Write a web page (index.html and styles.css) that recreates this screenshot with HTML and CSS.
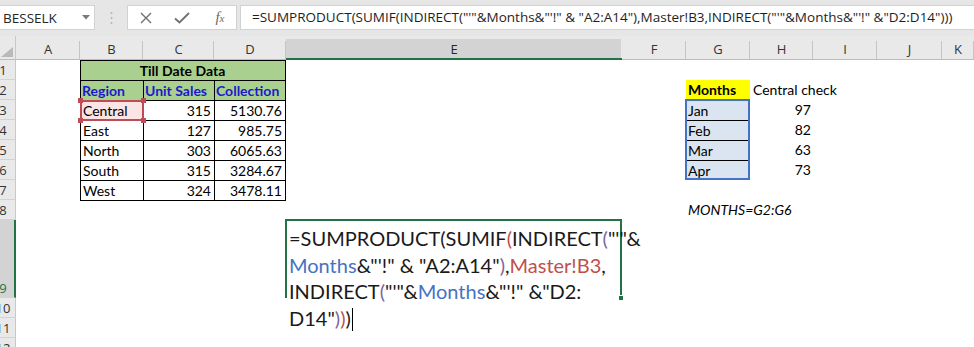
FILE: index.html
```html
<!DOCTYPE html>
<html lang="en">
<head>
  <meta charset="UTF-8"/>
  <title>Sheet</title>
  <link rel="stylesheet" href="styles.css">
</head>
<body>
  <div class="fbar">
    <div class="namebox">
      <span>BESSELK</span>
      <svg width="8" height="5" viewBox="0 0 8 5"><path d="M0 0h8L4 4.5z" fill="#7a7a7a"/></svg>
    </div>
    <div class="grip">
      <svg width="3" height="14" viewBox="0 0 3 14"><circle cx="1.5" cy="2" r="1" fill="#b3b3b3"/><circle cx="1.5" cy="7" r="1" fill="#b3b3b3"/><circle cx="1.5" cy="12" r="1" fill="#b3b3b3"/></svg>
    </div>
    <div class="fbtns">
      <span class="slot"><svg width="12" height="12" viewBox="0 0 12 12"><path d="M1 1l10 10M11 1L1 11" stroke="#707070" stroke-width="1.4"/></svg></span>
      <span class="slot"><svg width="16" height="12" viewBox="0 0 16 12"><path d="M1 6.5l4.5 4L15 1" stroke="#707070" stroke-width="1.8" fill="none"/></svg></span>
      <span class="slot fx">f<small>x</small></span>
    </div>
    <div class="finput">=SUMPRODUCT(SUMIF(INDIRECT("'"&amp;Months&amp;"'!" &amp; "A2:A14"),Master!B3,INDIRECT("'"&amp;Months&amp;"'!" &amp;"D2:D14")))</div>
  </div>

  <div class="sheet">
    <div class="corner"><svg width="12" height="10" viewBox="0 0 12 10"><path d="M12 0v10H0z" fill="#b9b9b9"/></svg></div>
    <div class="colhead">A</div>
    <div class="colhead">B</div>
    <div class="colhead">C</div>
    <div class="colhead">D</div>
    <div class="colhead active">E</div>
    <div class="colhead">F</div>
    <div class="colhead">G</div>
    <div class="colhead">H</div>
    <div class="colhead">I</div>
    <div class="colhead">J</div>
    <div class="colhead">K</div>

    <div class="rowhead"><span>1</span></div>
    <div class="rowhead"><span>2</span></div>
    <div class="rowhead"><span>3</span></div>
    <div class="rowhead"><span>4</span></div>
    <div class="rowhead"><span>5</span></div>
    <div class="rowhead"><span>6</span></div>
    <div class="rowhead"><span>7</span></div>
    <div class="rowhead"><span>8</span></div>
    <div class="rowhead active"><span>9</span></div>
    <div class="rowhead"><span>10</span></div>
    <div class="rowhead"><span>11</span></div>
    <div class="rowhead"><span>12</span></div>

    <div class="datatable">
      <div class="cell title">Till Date Data</div>
      <div class="cell head">Region</div>
      <div class="cell head">Unit Sales</div>
      <div class="cell head">Collection</div>
      <div class="cell ref-red">Central<i class="h tl"></i><i class="h tr"></i><i class="h bl"></i><i class="h br"></i></div>
      <div class="cell num">315</div>
      <div class="cell num">5130.76</div>
      <div class="cell">East</div>
      <div class="cell num">127</div>
      <div class="cell num">985.75</div>
      <div class="cell">North</div>
      <div class="cell num">303</div>
      <div class="cell num">6065.63</div>
      <div class="cell">South</div>
      <div class="cell num">315</div>
      <div class="cell num">3284.67</div>
      <div class="cell">West</div>
      <div class="cell num">324</div>
      <div class="cell num">3478.11</div>
    </div>

    <div class="months">
      <div class="mhead">Months</div>
      <div class="mcheck">Central check</div>
      <div class="ref-blue">
        <div class="mcell">Jan</div>
        <div class="mcell">Feb</div>
        <div class="mcell">Mar</div>
        <div class="mcell last">Apr</div>
      </div>
      <div class="mval">97</div>
      <div class="mval">82</div>
      <div class="mval">63</div>
      <div class="mval">73</div>
    </div>

    <div class="note">MONTHS=G2:G6</div>

    <div class="edit">
      <div class="line">=SUMPRODUCT(SUMIF<span class="p-red">(</span>INDIRECT<span class="p-purple">(</span>"'"&amp;</div>
      <div class="line"><span class="r-blue">Months</span>&amp;"'!" &amp; "A2:A14"<span class="p-purple">)</span>,<span class="r-red">Master!B3</span>,</div>
      <div class="line">INDIRECT<span class="p-purple">(</span>"'"&amp;<span class="r-blue">Months</span>&amp;"'!" &amp;"D2:</div>
      <div class="line">D14"<span class="p-purple">)</span><span class="p-red">)</span>)<span class="caret"></span></div>
      <i class="fill"></i>
    </div>
  </div>
</body>
</html>
```

FILE: styles.css
```css
* {
  box-sizing: border-box;
}
body {
  margin: 0;
  width: 974px;
  height: 347px;
  overflow: hidden;
  background: #fff;
  font-family: Lato, "Liberation Sans", sans-serif;
  color: #000;
}

/* formula bar */
.fbar {
  height: 36px;
  background: #e6e6e6;
  display: flex;
  align-items: flex-start;
  padding-top: 5px;
  font-family: "Open Sans", sans-serif;
}
.namebox {
  width: 95px;
  height: 25px;
  background: #fff;
  border: 1px solid #d2d2d2;
  border-left: none;
  display: flex;
  align-items: center;
  justify-content: space-between;
  padding: 0 4px 0 3px;
  font-size: 13.5px;
  color: #262626;
}
.grip {
  width: 32px;
  height: 25px;
  display: flex;
  align-items: center;
  justify-content: center;
}
.fbtns {
  width: 110px;
  height: 25px;
  background: #fff;
  border: 1px solid #d2d2d2;
  display: flex;
  align-items: center;
}
.slot {
  width: 37px;
  display: flex;
  justify-content: center;
  align-items: center;
}
.fx {
  font-family: "Liberation Serif", serif;
  font-style: italic;
  font-size: 15px;
  color: #6a6a6a;
  padding-left: 4px;
}
.fx small {
  font-size: 11px;
}
.finput {
  flex: 1;
  margin-left: 3px;
  height: 25px;
  background: #fff;
  border: 1px solid #d2d2d2;
  border-right: none;
  padding-left: 11px;
  font-size: 13.5px;
  line-height: 23px;
  color: #1e1e1e;
  white-space: nowrap;
  overflow: hidden;
}

/* sheet grid */
.sheet {
  display: grid;
  grid-template-columns: 16px 64px 63px 71px 72px 336px 64px 64px 63px 64px 65px 1fr;
  grid-template-rows: 24px repeat(8, 20px) 78px repeat(3, 20px);
}
.corner {
  grid-row: 1;
  background: #e9e9e9;
  border-right: 1px solid #c8c8c8;
  border-bottom: 1px solid #bdbdbd;
  display: flex;
  align-items: flex-end;
  justify-content: flex-end;
  padding: 0 2px 2px 0;
}
.colhead {
  grid-row: 1;
  background: linear-gradient(#c4c4c4, #c4c4c4) right bottom / 1px 18px no-repeat, #e9e9e9;
  border-bottom: 1px solid #bdbdbd;
  font-family: "Open Sans", sans-serif;
  font-size: 13px;
  color: #333;
  text-align: center;
  padding-top: 4px;
  line-height: 18px;
}
.colhead.active {
  background: linear-gradient(#d3d3d3, #d3d3d3) left bottom / calc(100% - 1px) 19px no-repeat, #e9e9e9;
  border-bottom: 2px solid #217346;
  color: #262626;
}
.rowhead {
  grid-column: 1;
  background: #e9e9e9;
  border-right: 1px solid #c8c8c8;
  border-bottom: 1px solid #d3d3d3;
  overflow: hidden;
  font-family: "Open Sans", sans-serif;
  font-size: 13px;
  color: #333;
  display: flex;
  align-items: flex-end;
}
.rowhead span {
  flex: none;
  width: 24px;
  margin-left: -9px;
  text-align: center;
  line-height: 18px;
}
.rowhead.active {
  background: #d3d3d3;
  border-right: 2px solid #217346;
  color: #217346;
}

/* data table B1:D7 */
.datatable {
  grid-column: 3 / 6;
  grid-row: 2 / 9;
  display: grid;
  grid-template-columns: 62px 70px 70px;
  grid-auto-rows: 19px;
  gap: 1px;
  padding: 1px;
  background: #000;
  align-self: start;
  font-size: 14px;
}
.cell {
  background: #fff;
  padding: 0 3px 0 2px;
  line-height: 19px;
  white-space: nowrap;
}
.title {
  grid-column: 1 / 4;
  background: #a9d08e;
  font-weight: bold;
  text-align: center;
}
.head {
  background: #a9d08e;
  font-weight: bold;
  color: #1a1acd;
  padding: 0 1px;
}
.num {
  text-align: right;
}
.ref-red {
  position: relative;
  background: #fae4e4;
  outline: 2px solid #bf4b55;
  outline-offset: -1px;
}
.h {
  position: absolute;
  width: 5px;
  height: 5px;
  background: #bf4b55;
}
.tl { left: -3px; top: -3px; }
.tr { right: -3px; top: -3px; }
.bl { left: -3px; bottom: -3px; }
.br { right: -3px; bottom: -3px; }

/* months list G2:H6 */
.months {
  grid-column: 8 / 10;
  grid-row: 3 / 8;
  display: grid;
  grid-template-columns: 64px 63px;
  grid-template-rows: repeat(5, 20px);
  font-size: 14px;
}
.mhead {
  background: #ffff00;
  font-weight: bold;
  padding-left: 2px;
  line-height: 20px;
}
.mcheck {
  padding-left: 3px;
  line-height: 20px;
  white-space: nowrap;
}
.ref-blue {
  grid-column: 1;
  grid-row: 2 / 6;
  background: #dbe5f1;
  border: 2px solid #4472c4;
  margin: -1px 0 0 -1px;
  display: flex;
  flex-direction: column;
}
.mcell {
  height: 20px;
  border-bottom: 1px solid #000;
  padding-left: 1px;
  line-height: 19px;
}
.mcell.last {
  border-bottom: none;
}
.mval {
  grid-column: 2;
  text-align: right;
  padding-right: 2px;
  line-height: 20px;
}

.note {
  grid-column: 8 / 11;
  grid-row: 9;
  font-style: italic;
  font-size: 14px;
  padding-left: 2px;
  line-height: 20px;
  white-space: nowrap;
}

/* active cell E9 in edit mode */
.edit {
  grid-column: 6;
  grid-row: 10;
  position: relative;
  margin: -1px 0 0 -1px;
  border: 2px solid #217346;
  border-bottom: none;
  padding: 4px 0 0 2px;
  font-size: 20px;
  color: #1a1a1a;
}
.line {
  height: 26.5px;
  line-height: 26px;
  white-space: nowrap;
}
.fill {
  position: absolute;
  right: -4px;
  bottom: -3px;
  width: 6px;
  height: 6px;
  background: #217346;
  border: 1px solid #fff;
}
.p-red { color: #c0504d; }
.p-purple { color: #8064a2; }
.r-blue { color: #4472c4; }
.r-red { color: #c0504d; }
.caret {
  display: inline-block;
  width: 1px;
  height: 23px;
  background: #000;
  vertical-align: -5px;
  margin-left: 1px;
}
```
